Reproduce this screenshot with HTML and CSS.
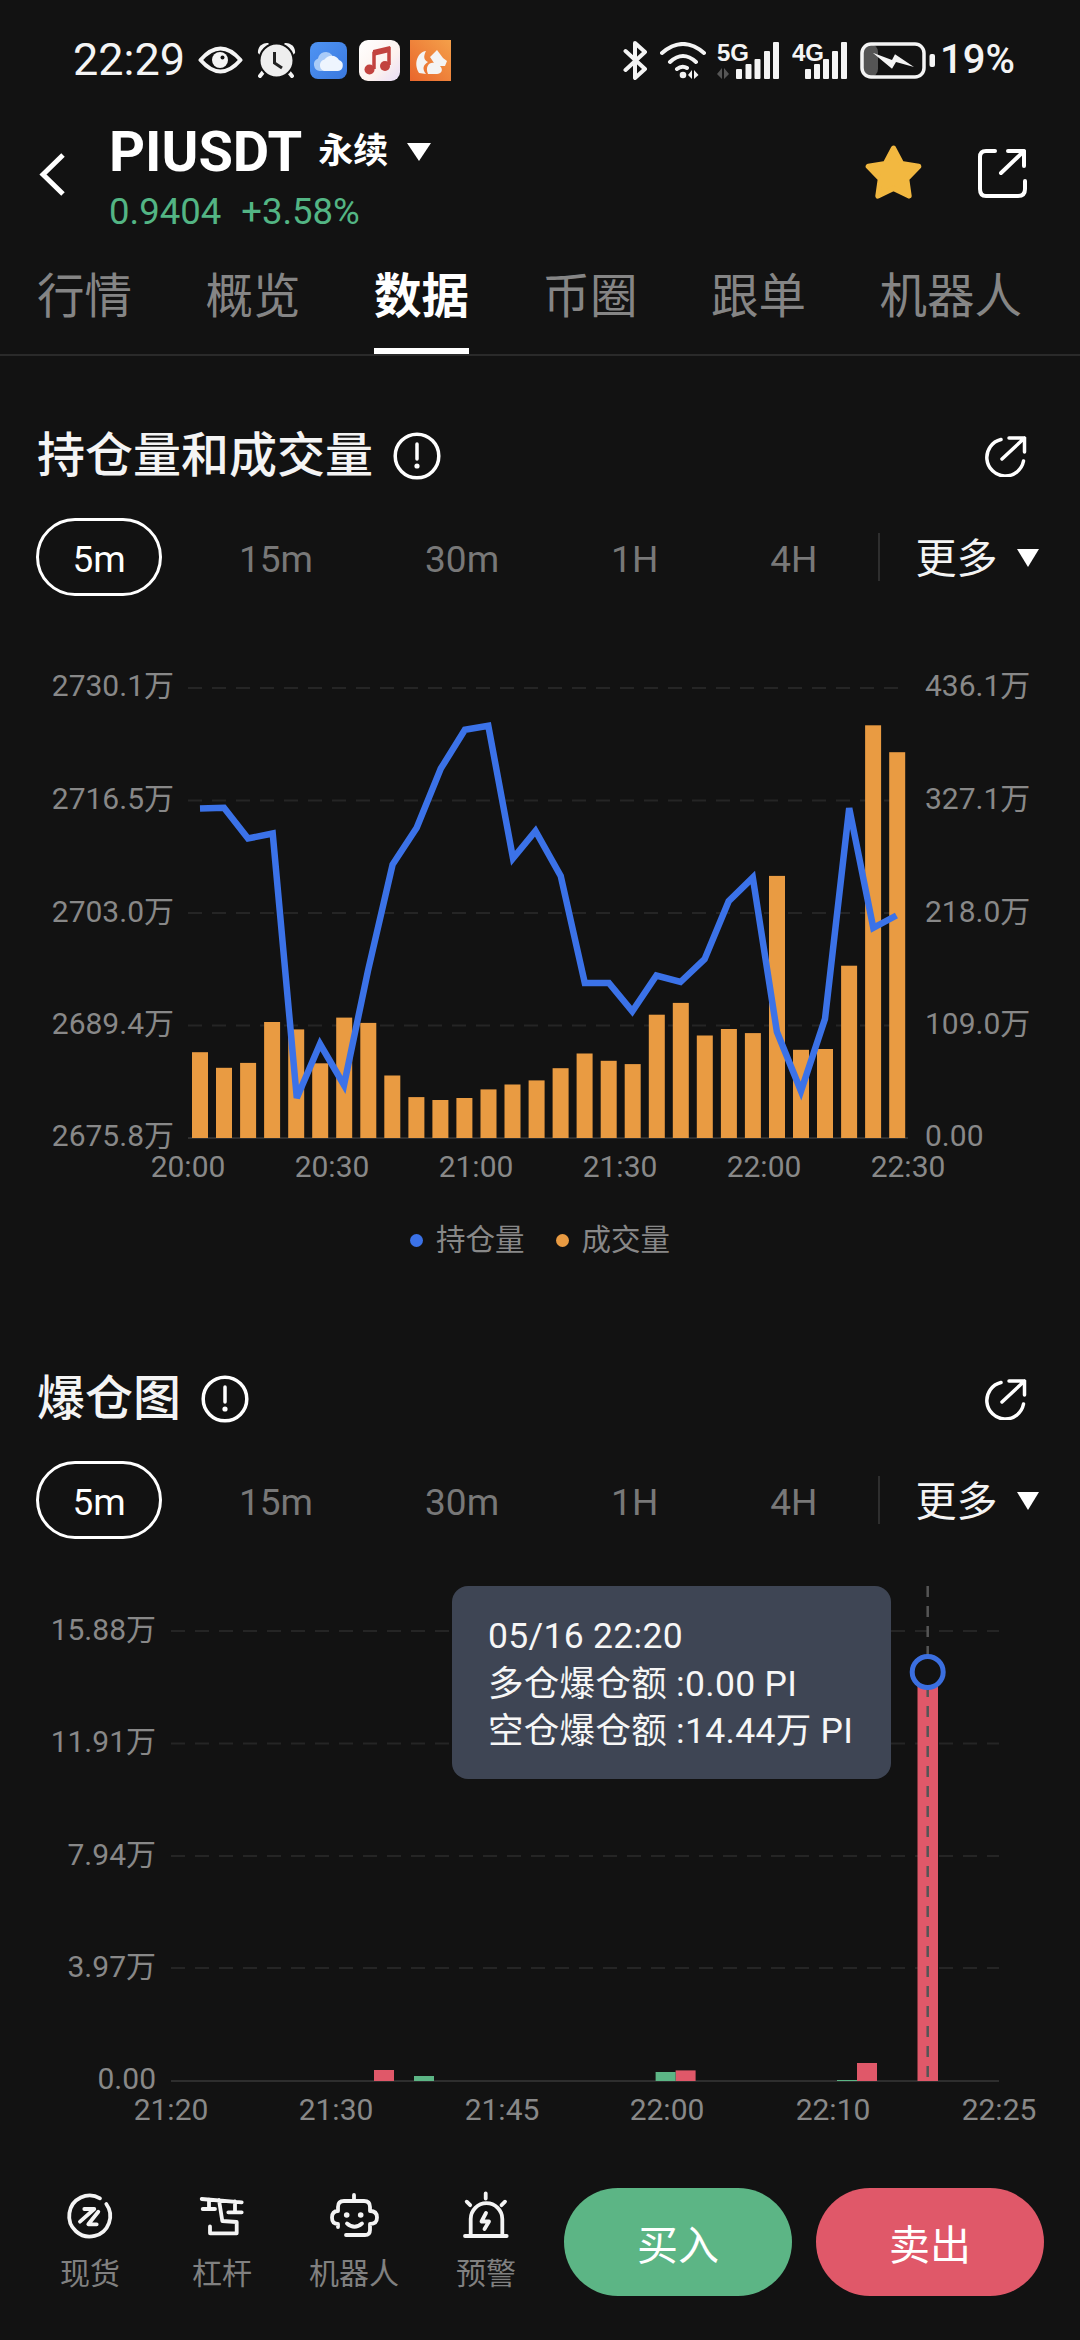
FILE: index.html
```html
<!DOCTYPE html>
<html lang="zh-CN">
<head>
<meta charset="utf-8">
<title>PIUSDT 永续</title>
<link rel="stylesheet" href="styles.css">
</head>
<body>
<div class="page">
  <header class="status">
    <div class="status-left">
      <span class="time">22:29</span>
      <svg class="ic-eye" viewBox="0 0 45 28"><path class="st-w" d="M2.500 14Q22.500-9 42.500 14 22.500 37 2.500 14Z"/><circle class="fill-w" cx="22" cy="14" r="8"/><circle class="fill-bg" cx="24.500" cy="11.500" r="2"/></svg>
      <svg class="ic-alarm" viewBox="0 0 39 36"><path class="fill-w" d="M1 11A9 9 0 0 1 11 1L13 3 3 13Z"/><path class="fill-w" d="M38 11A9 9 0 0 0 28 1L26 3 36 13Z"/><path class="st-w" d="M7 29 3 34M31 29 35 34"/><circle class="alarm-face" cx="19.500" cy="18.500" r="17"/><path class="alarm-hand" d="M17.500 10V21L25 26"/></svg>
      <svg class="ic-cloud" viewBox="0 0 37 37"><defs><linearGradient id="cl" x1="0" y1="0" x2="1" y2="1"><stop offset="0" stop-color="#4f94f3"/><stop offset="1" stop-color="#3a78de"/></linearGradient></defs><rect width="37" height="37" rx="8" fill="url(#cl)"/><path fill="#a9cbf8" d="M10 29A6.500 6.500 0 0 1 8 16.500 8 8 0 0 1 22 13V29Z"/><path fill="#eef5fe" d="M14 29A6 6 0 0 1 14.500 17.500 8.500 8.500 0 0 1 29 18 5.700 5.700 0 0 1 28 29Z"/></svg>
      <svg class="ic-music" viewBox="0 0 41 41"><defs><linearGradient id="mu" x1="0" y1="0" x2="1" y2="1"><stop offset="0" stop-color="#fff"/><stop offset=".6" stop-color="#fdf2ee"/><stop offset="1" stop-color="#e9ddf7"/></linearGradient></defs><rect width="41" height="41" rx="9" fill="url(#mu)"/><path class="note" d="M15 29V13L30 9V25"/><circle cx="10.500" cy="29.500" r="5" fill="#c2433f"/><circle cx="26" cy="26" r="5" fill="#c2433f"/><path fill="#c2433f" d="M14 10 31 6V12L14 16Z"/></svg>
      <svg class="ic-squirrel" viewBox="0 0 41 41"><defs><linearGradient id="sq" x1="1" y1="0" x2="0" y2="1"><stop offset="0" stop-color="#f4a04a"/><stop offset="1" stop-color="#e9662c"/></linearGradient></defs><rect width="41" height="41" fill="url(#sq)"/><path class="fill-w" d="M9 33C3 23 8 12 16 11 13 17 14 20 18 22 13 25 12 29 16 34Z"/><path class="fill-w" d="M18 34C15 27 19 22 24 23L20 17 27 10 33 18 37 21 35 26 30 26C34 30 31 34 27 34Z"/></svg>
    </div>
    <div class="status-right">
      <svg class="ic-bt" viewBox="0 0 25 39"><path class="st-w" d="M2.500 10 22 28 12 37V2L22 11 2.500 29"/></svg>
      <svg class="ic-wifi" viewBox="0 0 46 37"><path class="st-w" d="M2 11Q23-7 44 11M10 20Q23 8 36 20M17 27Q22 23 27 26"/><circle class="fill-w" cx="23" cy="33" r="3.300"/><path class="fill-w" d="M28 33 32 28V37ZM34 28V37L38.500 33Z"/></svg>
      <svg class="ic-sig5" viewBox="0 -6 62 43"><text class="net" x="0" y="19">5G</text><path class="fill-dim" d="M0 32 5 26V37ZM7 26V37L12 32Z"/><rect class="fill-w" x="19" y="27" width="6" height="10" rx="1"/><rect class="fill-w" x="28.500" y="22" width="6" height="15" rx="1"/><rect class="fill-w" x="37.500" y="17" width="6" height="20" rx="1"/><rect class="fill-w" x="47" y="9" width="6" height="28" rx="1"/><rect class="fill-w" x="56" y="0" width="6" height="37" rx="1"/></svg>
      <svg class="ic-sig4" viewBox="0 -6 55 43"><text class="net" x="0" y="19">4G</text><rect class="fill-w" x="13" y="27" width="6" height="10" rx="1"/><rect class="fill-w" x="22" y="22" width="6" height="15" rx="1"/><rect class="fill-w" x="31" y="17" width="6" height="20" rx="1"/><rect class="fill-w" x="40" y="9" width="6" height="28" rx="1"/><rect class="fill-w" x="49" y="0" width="6" height="37" rx="1"/></svg>
      <svg class="ic-batt" viewBox="0 0 75 37"><rect class="batt-lvl" x="2" y="2" width="16" height="33" rx="8"/><rect class="batt-box" x="2" y="2" width="62" height="33" rx="9"/><path class="fill-w" d="M12.700 10.700 32 18 35 12.300 54 25 36 20 32 26.700Z"/><rect class="fill-w" x="69.500" y="12" width="5.500" height="13" rx="2"/></svg>
      <span class="pct">19%</span>
    </div>
  </header>

  <section class="head">
    <svg class="back" viewBox="0 0 26 45"><path d="M24 3 4 22.500 24 42"/></svg>
    <div class="head-main">
      <div class="pair">
        <span class="pair-name">PIUSDT</span>
        <span class="pair-kind">永续</span>
        <svg class="tri-lg" viewBox="0 0 26 20"><path d="M1 1H25L13 19Z"/></svg>
      </div>
      <div class="quote"><span>0.9404</span><span>+3.58%</span></div>
    </div>
    <div class="head-actions">
      <svg class="star" viewBox="2 1 53 52"><path d="M28.500 4 36.100 18.500 52.300 21.300 40.900 33 43.200 49.200 28.500 42 13.800 49.200 16.100 33 4.700 21.300 20.900 18.500Z"/></svg>
      <svg class="share" viewBox="0 0 50 50"><path d="M18 3H9Q3 3 3 9V41Q3 48 9 48H41Q48 48 48 41V33M24 25 47 3M31 3H47V18"/></svg>
    </div>
  </section>

  <nav class="tabs">
    <a class="tab">行情</a>
    <a class="tab">概览</a>
    <a class="tab tab-on">数据</a>
    <a class="tab">币圈</a>
    <a class="tab">跟单</a>
    <a class="tab">机器人</a>
  </nav>

  <section class="sec sec-a">
    <div class="sec-head">
      <h2 class="sec-title">持仓量和成交量</h2>
      <svg class="info" viewBox="0 0 48 48"><circle cx="24" cy="24" r="21.800"/><path d="M24 12V27"/><circle class="info-dot" cx="24" cy="34" r="2.600"/></svg>
      <svg class="round-share" viewBox="0 0 42 42"><path d="M16 4.500A18.500 18.500 0 1 0 38.500 26M17 24 39.500 3M24 3H39.500V17"/></svg>
    </div>
    <div class="range">
      <span class="pill">5m</span>
      <span class="opt">15m</span>
      <span class="opt">30m</span>
      <span class="opt">1H</span>
      <span class="opt">4H</span>
      <span class="sep"></span>
      <span class="more">更多</span>
      <svg class="tri-sm" viewBox="0 0 24 20"><path d="M1 1H23L12 19Z"/></svg>
    </div>
    <svg class="chart chart-a" viewBox="0 640 1080 560">
      <path class="grid" d="M188 688H908M188 800.500H908M188 913H908M188 1025.500H908"/>
      <path class="axis" d="M188 1138H908"/>
      <g class="lbl">
        <text x="174" y="696" text-anchor="end">2730.1万</text>
        <text x="174" y="809" text-anchor="end">2716.5万</text>
        <text x="174" y="921.500" text-anchor="end">2703.0万</text>
        <text x="174" y="1034" text-anchor="end">2689.4万</text>
        <text x="174" y="1146" text-anchor="end">2675.8万</text>
        <text x="925" y="696">436.1万</text>
        <text x="925" y="809">327.1万</text>
        <text x="925" y="921.500">218.0万</text>
        <text x="925" y="1034">109.0万</text>
        <text x="925" y="1146">0.00</text>
        <text x="188" y="1177" text-anchor="middle">20:00</text>
        <text x="332" y="1177" text-anchor="middle">20:30</text>
        <text x="476" y="1177" text-anchor="middle">21:00</text>
        <text x="620" y="1177" text-anchor="middle">21:30</text>
        <text x="764" y="1177" text-anchor="middle">22:00</text>
        <text x="908" y="1177" text-anchor="middle">22:30</text>
      </g>
      <g class="vol">
        <rect x="192" y="1052.200" width="16" height="85.800"/>
        <rect x="216" y="1067.800" width="16" height="70.200"/>
        <rect x="240.100" y="1062.900" width="16" height="75.100"/>
        <rect x="264.100" y="1022" width="16" height="116"/>
        <rect x="288.200" y="1029.400" width="16" height="108.600"/>
        <rect x="312.200" y="1063.300" width="16" height="74.700"/>
        <rect x="336.200" y="1017.600" width="16" height="120.400"/>
        <rect x="360.300" y="1022.900" width="16" height="115.100"/>
        <rect x="384.300" y="1075.500" width="16" height="62.500"/>
        <rect x="408.400" y="1097.100" width="16" height="40.900"/>
        <rect x="432.400" y="1100" width="16" height="38"/>
        <rect x="456.400" y="1098" width="16" height="40"/>
        <rect x="480.500" y="1089.400" width="16" height="48.600"/>
        <rect x="504.500" y="1084.500" width="16" height="53.500"/>
        <rect x="528.600" y="1080.400" width="16" height="57.600"/>
        <rect x="552.600" y="1068.200" width="16" height="69.800"/>
        <rect x="576.600" y="1053.500" width="16" height="84.500"/>
        <rect x="600.700" y="1060.800" width="16" height="77.200"/>
        <rect x="624.700" y="1064.100" width="16" height="73.900"/>
        <rect x="648.800" y="1014.700" width="16" height="123.300"/>
        <rect x="672.800" y="1002.900" width="16" height="135.100"/>
        <rect x="696.800" y="1035.500" width="16" height="102.500"/>
        <rect x="720.900" y="1029" width="16" height="109"/>
        <rect x="744.900" y="1033.100" width="16" height="104.900"/>
        <rect x="769" y="875.900" width="16" height="262.100"/>
        <rect x="793" y="1049.800" width="16" height="88.200"/>
        <rect x="817" y="1049" width="16" height="89"/>
        <rect x="841.100" y="965.700" width="16" height="172.300"/>
        <rect x="865.100" y="725.300" width="16" height="412.700"/>
        <rect x="889.200" y="752.200" width="16" height="385.800"/>
      </g>
      <polyline class="oi" points="200,808.600 224,807.800 248,838.400 272.700,833.500 296.800,1098 320,1044 344,1085 368,970.600 392.600,864.500 416.700,827.800 440.800,768.600 464.900,729.800 488.300,725.700 513,858.400 535.500,831 560.700,875.900 584.800,982.900 608.900,982.900 632.300,1011.400 656.400,975.500 680.500,982 704.600,959.200 728.700,901.200 752.800,877.600 776.900,1031.800 801,1091 825,1018.800 849.200,808.200 873.300,927.800 896.400,915.500"/>
    </svg>
    <div class="legend">
      <span class="key"><i class="dot dot-blue"></i>持仓量</span>
      <span class="key"><i class="dot dot-orange"></i>成交量</span>
    </div>
  </section>

  <section class="sec sec-b">
    <div class="sec-head">
      <h2 class="sec-title">爆仓图</h2>
      <svg class="info" viewBox="0 0 48 48"><circle cx="24" cy="24" r="21.800"/><path d="M24 12V27"/><circle class="info-dot" cx="24" cy="34" r="2.600"/></svg>
      <svg class="round-share" viewBox="0 0 42 42"><path d="M16 4.500A18.500 18.500 0 1 0 38.500 26M17 24 39.500 3M24 3H39.500V17"/></svg>
    </div>
    <div class="range">
      <span class="pill">5m</span>
      <span class="opt">15m</span>
      <span class="opt">30m</span>
      <span class="opt">1H</span>
      <span class="opt">4H</span>
      <span class="sep"></span>
      <span class="more">更多</span>
      <svg class="tri-sm" viewBox="0 0 24 20"><path d="M1 1H23L12 19Z"/></svg>
    </div>
    <div class="chart-wrap">
      <svg class="chart chart-b" viewBox="0 1570 1080 570">
        <path class="grid" d="M171 1630H999M171 1742.400H999M171 1855H999M171 1967H999"/>
        <path class="axis" d="M171 2080H999"/>
        <g class="lbl lbl-b">
          <text x="156" y="1639" text-anchor="end">15.88万</text>
          <text x="156" y="1751" text-anchor="end">11.91万</text>
          <text x="156" y="1864" text-anchor="end">7.94万</text>
          <text x="156" y="1976" text-anchor="end">3.97万</text>
          <text x="156" y="2088" text-anchor="end">0.00</text>
          <text x="171" y="2119" text-anchor="middle">21:20</text>
          <text x="336" y="2119" text-anchor="middle">21:30</text>
          <text x="502" y="2119" text-anchor="middle">21:45</text>
          <text x="667" y="2119" text-anchor="middle">22:00</text>
          <text x="833" y="2119" text-anchor="middle">22:10</text>
          <text x="999" y="2119" text-anchor="middle">22:25</text>
        </g>
        <g class="short">
          <rect x="374" y="2069" width="20" height="11"/>
          <rect x="675.600" y="2069.400" width="20" height="10.600"/>
          <rect x="857" y="2062" width="20" height="18"/>
          <rect x="917.500" y="1680" width="20.500" height="400"/>
        </g>
        <g class="long">
          <rect x="414" y="2075" width="20" height="5"/>
          <rect x="655.600" y="2071" width="20" height="9"/>
          <rect x="837" y="2079" width="20" height="1"/>
        </g>
        <path class="cursor" d="M927.700 1585V2080"/>
        <circle class="marker" cx="927.700" cy="1671" r="15.500"/>
      </svg>
      <div class="tooltip">
        <div>05/16 22:20</div>
        <div>多仓爆仓额 :0.00 PI</div>
        <div>空仓爆仓额 :14.44万 PI</div>
      </div>
    </div>
  </section>

  <footer class="bar">
    <div class="tool">
      <svg class="tool-ic" viewBox="0 0 54 54"><path d="M43.300 16A20.500 20.500 0 1 1 37 10.300M21.300 21H31.300L17 33.700M35.300 23.700 25.300 36.300H33.700"/></svg>
      <span class="tool-lbl">现货</span>
    </div>
    <div class="tool">
      <svg class="tool-ic" viewBox="0 0 54 54"><path d="M6.700 11 46.700 14.300M7.700 21H20M14 11.500V21M33.300 24.300H46.700M40 13.500V24.300M24 12 27.300 33 41.700 34V45.300H15V38.500"/></svg>
      <span class="tool-lbl">杠杆</span>
    </div>
    <div class="tool">
      <svg class="tool-ic" viewBox="0 0 54 54"><path d="M27 7V13M19 47H38Q43 47 43 42V36Q50 36 50 29.500 50 23 43 23V19Q43 13 37 13H17Q11 13 11 19V23Q5 23 5 29.500 5 36 11 36V39M20 35.500Q27.500 42 35 35.500"/><circle class="tool-dot" cx="19.700" cy="27" r="2.800"/><circle class="tool-dot" cx="33.700" cy="27" r="2.800"/></svg>
      <span class="tool-lbl">机器人</span>
    </div>
    <div class="tool">
      <svg class="tool-ic" viewBox="0 0 54 54"><path d="M6 48H47.700M11.700 47V31A15.800 15.800 0 0 1 43.300 31V47M26.700 5.300V10.500M7.700 13.700 11.200 17.200M46 13.700 42.500 17.200M27 25 22.500 33.500H30L25.500 41"/></svg>
      <span class="tool-lbl">预警</span>
    </div>
    <button class="btn btn-buy">买入</button>
    <button class="btn btn-sell">卖出</button>
  </footer>
</div>
</body>
</html>
```

FILE: styles.css
```css
* { box-sizing: border-box; }
html, body { margin: 0; padding: 0; background: #121212; }
.page {
  width: 1080px;
  height: 2340px;
  overflow: hidden;
  background: #121212;
  color: #fff;
  font-family: Roboto, "Noto Sans CJK SC", sans-serif;
}
svg { display: block; flex: none; }

/* shared svg fills */
.fill-w { fill: #f4f4f4; }
.fill-bg { fill: #121212; }
.fill-dim { fill: #555; }
.st-w { fill: none; stroke: #f4f4f4; stroke-width: 4; stroke-linecap: round; stroke-linejoin: round; }

/* status bar */
.status { height: 120px; padding: 0 65px 0 73px; display: flex; align-items: center; justify-content: space-between; }
.status-left, .status-right { display: flex; align-items: center; }
.time { font-size: 45px; font-weight: 400; line-height: 50px; color: #f4f4f4; margin-right: 13px; }
.ic-eye { width: 45px; height: 28px; margin-right: 14px; }
.ic-alarm { width: 39px; height: 36px; margin-right: 14px; }
.alarm-face { fill: #eee; stroke: #121212; stroke-width: 2; }
.alarm-hand { fill: none; stroke: #222; stroke-width: 3; }
.ic-cloud { width: 37px; height: 37px; margin-right: 12px; }
.ic-music { width: 41px; height: 41px; margin-right: 10px; }
.note { fill: none; stroke: #c2433f; stroke-width: 3.500; }
.ic-squirrel { width: 41px; height: 41px; }
.ic-bt { width: 25px; height: 39px; margin-right: 12px; }
.ic-wifi { width: 46px; height: 37px; margin-right: 11px; }
.ic-sig5 { width: 62px; height: 43px; margin-top: -6px; margin-right: 13px; }
.ic-sig4 { width: 55px; height: 43px; margin-top: -6px; margin-right: 13px; }
.net { font-family: "Liberation Sans Narrow", "Liberation Sans", sans-serif; font-weight: 700; font-size: 24px; fill: #f4f4f4; }
.ic-batt { width: 75px; height: 37px; margin-right: 5px; }
.batt-lvl { fill: #555; }
.batt-box { fill: none; stroke: #f4f4f4; stroke-width: 3.500; }
.pct { font-size: 40px; font-weight: 500; line-height: 50px; color: #f4f4f4; }

/* pair header */
.head { height: 146px; padding-left: 39px; padding-right: 53px; display: flex; }
.back { width: 26px; height: 45px; margin-top: 32px; margin-right: 44px; fill: none; stroke: #fff; stroke-width: 5; }
.head-main { flex: 1; }
.pair { display: flex; align-items: center; height: 64px; }
.pair-name { font-size: 56px; font-weight: 700; line-height: 64px; }
.pair-kind { font-size: 35px; font-weight: 700; margin-left: 16px; line-height: 44px; }
.tri-lg { width: 26px; height: 20px; margin-left: 18px; fill: #fff; }
.quote { display: flex; gap: 20px; margin-top: 4px; font-size: 36.500px; line-height: 48px; color: #53b584; }
.head-actions { display: flex; align-items: flex-start; }
.star { width: 57px; height: 55px; margin-top: 25px; margin-right: 55px; fill: #f2b840; stroke: #f2b840; stroke-width: 5; stroke-linejoin: round; }
.share { width: 50px; height: 50px; margin-top: 28px; fill: none; stroke: #fff; stroke-width: 4; stroke-linecap: round; stroke-linejoin: round; }

/* tabs */
.tabs { height: 90px; padding-left: 37px; display: flex; gap: 73.500px; border-bottom: 2px solid #2a2a2a; }
.tab { height: 88px; font-size: 47.500px; line-height: 62px; color: #858585; border-bottom: 6px solid transparent; }
.tab-on { color: #fff; font-weight: 700; border-bottom-color: #fff; }

/* sections */
.sec-a { padding-top: 60px; }
.sec-b { padding-top: 99px; }
.sec-head { height: 80px; padding: 0 53px 0 37px; display: flex; align-items: center; }
.sec-title { margin: 0; font-size: 48px; font-weight: 500; line-height: 80px; color: #f4f4f4; }
.info { width: 48px; height: 48px; margin-left: 20px; fill: none; stroke: #fff; stroke-width: 3.500; stroke-linecap: round; }
.info-dot { fill: #fff; stroke: none; }
.round-share { width: 42px; height: 42px; margin-left: auto; fill: none; stroke: #fff; stroke-width: 3.500; stroke-linecap: round; stroke-linejoin: round; }

.range { height: 78px; margin-top: 22px; padding-left: 36px; display: flex; align-items: center; }
.pill { width: 126px; height: 78px; margin-right: 77px; padding-top: 4px; border: 3px solid #fff; border-radius: 39px; display: flex; align-items: center; justify-content: center; font-size: 37px; color: #fff; }
.opt { padding-top: 5px; font-size: 37px; color: #787878; line-height: 50px; }
.opt + .opt { margin-left: 112px; }
.sep { width: 2px; height: 48px; margin-left: 60px; background: #2e2e2e; }
.more { margin-left: 36px; padding-top: 4px; font-size: 41px; line-height: 50px; color: #f4f4f4; }
.tri-sm { width: 24px; height: 20px; margin-left: 18px; margin-top: 2px; fill: #fff; }

/* charts */
.chart { width: 1080px; }
.chart-a { height: 560px; margin-top: 44px; }
.chart-b { height: 570px; }
.chart-wrap { position: relative; margin-top: 32px; height: 570px; }
.grid { fill: none; stroke: #252525; stroke-width: 2; stroke-dasharray: 14 10; }
.axis { fill: none; stroke: #2e2e2e; stroke-width: 2; }
.lbl { font-family: Roboto, "Noto Sans CJK SC", sans-serif; font-size: 30px; fill: #888; }
.lbl-b { font-size: 30px; }
.vol { fill: #e99b42; }
.oi { fill: none; stroke: #3b72e8; stroke-width: 6.500; stroke-linejoin: miter; }
.short { fill: #e05869; }
.long { fill: #5cb585; }
.cursor { fill: none; stroke: #555; stroke-width: 2.500; stroke-dasharray: 11 9; }
.marker { fill: #121212; stroke: #3b6fe0; stroke-width: 5; }

.tooltip { position: absolute; left: 452px; top: 15px; width: 439px; height: 193px; padding: 27px 36px; border-radius: 16px; background: #3e4554; font-size: 35.500px; letter-spacing: .3px; line-height: 47.500px; color: #f6f6f6; white-space: nowrap; }

/* legend */
.legend { height: 40px; margin-top: 20px; padding-left: 410px; display: flex; gap: 31px; }
.key { display: flex; align-items: center; font-size: 29.500px; line-height: 40px; color: #888; }
.dot { width: 13px; height: 13px; border-radius: 50%; margin-right: 13px; }
.dot-blue { background: #3b72e8; }
.dot-orange { background: #e99b42; }

/* bottom bar */
.bar { height: 200px; padding: 47px 36px 0 24px; display: flex; align-items: flex-start; }
.tool { width: 132px; display: flex; flex-direction: column; align-items: center; }
.tool-ic { width: 54px; height: 54px; fill: none; stroke: #f4f4f4; stroke-width: 3.800; stroke-linecap: round; stroke-linejoin: round; }
.tool-dot { fill: #f4f4f4; stroke: none; }
.tool-lbl { margin-top: 10px; font-size: 30px; line-height: 44px; color: #808080; white-space: nowrap; }
.btn { width: 228px; height: 108px; border: 0; border-radius: 54px; font-family: inherit; font-size: 41px; color: #fff; }
.btn-buy { margin-left: 12px; background: #5cb585; }
.btn-sell { margin-left: 24px; background: #e05869; }
```
